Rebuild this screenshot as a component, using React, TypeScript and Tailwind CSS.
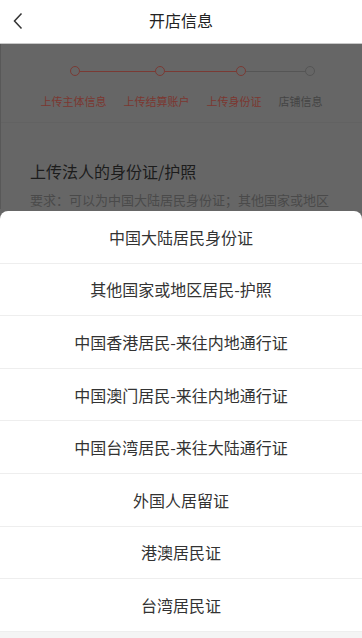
import React from "react";

const options = [
  "中国大陆居民身份证",
  "其他国家或地区居民-护照",
  "中国香港居民-来往内地通行证",
  "中国澳门居民-来往内地通行证",
  "中国台湾居民-来往大陆通行证",
  "外国人居留证",
  "港澳居民证",
  "台湾居民证",
];

const steps = [
  { label: "上传主体信息", done: true },
  { label: "上传结算账户", done: true },
  { label: "上传身份证", done: true },
  { label: "店铺信息", done: false },
];

export default function App() {
  return (
    <div
      className="relative w-[362px] h-[638px] overflow-hidden bg-[#666666]"
      style={{ fontFamily: '"Noto Sans CJK SC", "Noto Sans", sans-serif' }}
    >
      {/* header */}
      <div className="relative h-[44px] pb-[4px] bg-white border-b border-[#c8c8c8] flex items-center justify-center">
        <svg className="absolute left-[12px] top-[12px]" width="12" height="18" viewBox="0 0 12 18">
          <path d="M9.5 1.5 L2.5 9 L9.5 16.5" fill="none" stroke="#333" strokeWidth="1.5" />
        </svg>
        <span className="text-[16px] text-[#222]">开店信息</span>
      </div>

      {/* dimmed page */}
      <div className="border-l border-[#585858]">
        <div className="pt-[22px] flex items-center ml-[69px]">
          <Dot red />
          <div className="w-[75px] h-px bg-[#7a3a34]" />
          <Dot red />
          <div className="w-[71px] h-px bg-[#7a3a34]" />
          <Dot red />
          <div className="w-[59px] h-px bg-[#555555]" />
          <Dot />
        </div>
        <div className="mt-[18px] flex justify-center gap-[17px]">
          {steps.map((s) => (
            <span
              key={s.label}
              className={`text-[11px] leading-[14px] ${s.done ? "text-[#7c3730]" : "text-[#444444]"}`}
            >
              {s.label}
            </span>
          ))}
        </div>
        <div className="mt-[14px] h-px bg-[#626262]" />
        <div className="px-[29px] pt-[37px]">
          <div className="text-[16px] leading-[22px] text-[#1c1c1c]">上传法人的身份证/护照</div>
          <div className="mt-[9px] text-[13px] leading-[18px] text-[#4a4a4a] whitespace-nowrap">
            要求：可以为中国大陆居民身份证；其他国家或地区
          </div>
        </div>
      </div>

      {/* bottom sheet */}
      <div className="absolute left-0 right-0 top-[211px] bottom-0 bg-white rounded-t-[8px] flex flex-col">
        {options.map((o) => (
          <div
            key={o}
            className="h-[52.6px] shrink-0 border-b border-[#eeeeee] flex items-center justify-center text-[16px] text-[#333333]"
          >
            {o}
          </div>
        ))}
        <div className="flex-1 bg-[#f4f4f4]" />
      </div>
    </div>
  );
}

function Dot({ red }: { red?: boolean }) {
  return (
    <div
      className={`w-[10px] h-[10px] rounded-full border ${red ? "border-[#7a3a34]" : "border-[#555555]"}`}
    />
  );
}
